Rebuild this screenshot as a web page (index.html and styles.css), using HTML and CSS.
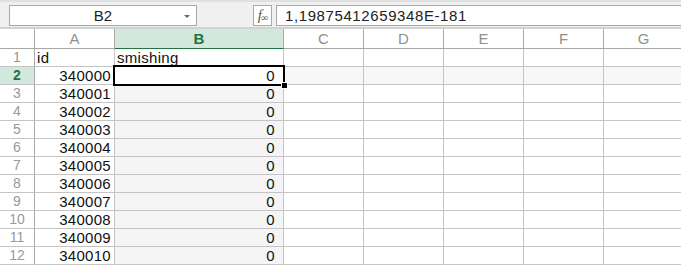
FILE: index.html
```html
<!DOCTYPE html>
<html>
  <head>
    <link rel="stylesheet" href="styles.css">
  </head>
  <body>
    <div class="formula-bar">
      <div class="name-box">
        <span class="name-text">B2</span>
        <span class="caret"></span>
      </div>
      <div class="fx">f<span class="fx-sub">∞</span></div>
      <div class="formula-input">1,19875412659348E-181</div>
    </div>
    <div class="sheet" id="sheet"></div>
    <script>
      const cols = ['A', 'B', 'C', 'D', 'E', 'F', 'G'];
      const sheet = document.querySelector('#sheet');

      function cell(cls, text) {
        const el = document.createElement('div');
        el.className = cls;
        if (text !== undefined) el.textContent = text;
        sheet.appendChild(el);
        return el;
      }

      cell('hd corner');
      cols.forEach((c) => cell(c === 'B' ? 'hd col active' : 'hd col', c));

      for (let r = 1; r <= 12; r++) {
        cell(r === 2 ? 'hd row active' : 'hd row', r);
        cols.forEach((c) => {
          let cls = 'cell';
          let text = '';
          if (r === 1 && c === 'A') text = 'id';
          if (r === 1 && c === 'B') text = 'smishing';
          if (r > 1 && c === 'A') { text = 340000 + r - 2; cls += ' num'; }
          if (r > 1 && c === 'B') { text = '0'; cls += ' num wide'; }
          if (r > 2 && c === 'B') cls += ' shade';
          if (r === 2 && c !== 'A' && c !== 'B') cls += ' band';
          if (r === 2 && c === 'B') cls += ' selected';
          cell(cls, text);
        });
      }
    </script>
  </body>
</html>
```

FILE: styles.css
```css
body {
  margin: 0;
  padding: 0;
  background-color: #fff;
  font-family: "Liberation Sans", Arial, sans-serif;
  overflow: hidden;
}
.formula-bar {
  display: flex;
  align-items: center;
  padding-top: 1px;
  background-color: #f0f0f0;
  border-top: 2px solid #e0e0e0;
  border-bottom: 2px solid #d2d2d2;
  box-sizing: border-box;
  height: 29px;
}
.name-box {
  position: relative;
  margin-left: 9px;
  width: 188px;
  height: 21px;
  box-sizing: border-box;
  border: 1px solid #a9a9a9;
  background-color: #fff;
  display: flex;
  align-items: center;
  justify-content: center;
  font-size: 15px;
  color: #222;
}
.caret {
  position: absolute;
  right: 6px;
  top: 9px;
  border-left: 3px solid transparent;
  border-right: 3px solid transparent;
  border-top: 3px solid #666;
}
.fx {
  margin-left: 56px;
  width: 19px;
  height: 21px;
  box-sizing: border-box;
  border: 1px solid #a9a9a9;
  background-color: #fff;
  font-family: "Liberation Serif", serif;
  font-style: italic;
  font-size: 15px;
  color: #555;
  display: flex;
  align-items: center;
  justify-content: center;
  letter-spacing: -1px;
}
.fx-sub {
  font-size: 10px;
  font-style: normal;
  margin-top: 4px;
}
.formula-input {
  margin-left: 4px;
  flex: 1;
  height: 21px;
  box-sizing: border-box;
  border: 1px solid #a9a9a9;
  border-right: none;
  background-color: #fff;
  padding-left: 8px;
  font-size: 15px;
  line-height: 19px;
  color: #222;
  letter-spacing: 0.6px;
}
.sheet {
  display: grid;
  grid-template-columns: 35px 80px 169px 80px 80px 80px 80px 80px;
  grid-template-rows: 20px repeat(12, 18px);
}
.hd {
  box-sizing: border-box;
  background-color: #fff;
  border-right: 1px solid #a8a8a8;
  border-bottom: 1px solid #a8a8a8;
  color: #909090;
  font-size: 15px;
  font-weight: 300;
  display: flex;
  align-items: center;
  justify-content: center;
}
.hd.row {
  border-bottom-color: #c4c4c4;
  font-size: 14px;
  line-height: 17px;
  color: #999;
}
.hd.active {
  background-color: #d3e8dc;
  color: #217346;
  font-weight: bold;
}
.hd.col.active {
  border-bottom: 1px solid #217346;
}
.cell {
  box-sizing: border-box;
  border-right: 1px solid #c4c4c4;
  border-bottom: 1px solid #c4c4c4;
  font-size: 15px;
  line-height: 17px;
  color: #111;
  padding: 0 3px 0 2px;
  white-space: nowrap;
  letter-spacing: 0.3px;
}
.cell.num {
  text-align: right;
}
.cell.wide {
  padding-right: 8px;
}
.cell.shade {
  background-color: #f5f5f5;
}
.cell.band {
  background-color: #f7f7f7;
}
.cell.selected {
  position: relative;
}
.cell.selected::after {
  content: '';
  position: absolute;
  left: -2px;
  top: -2px;
  right: -2px;
  bottom: -2px;
  border: 2px solid #000;
}
.cell.selected::before {
  content: '';
  position: absolute;
  right: -5px;
  bottom: -5px;
  width: 5px;
  height: 5px;
  background-color: #000;
  border: 1px solid #fff;
  z-index: 1;
}
```
